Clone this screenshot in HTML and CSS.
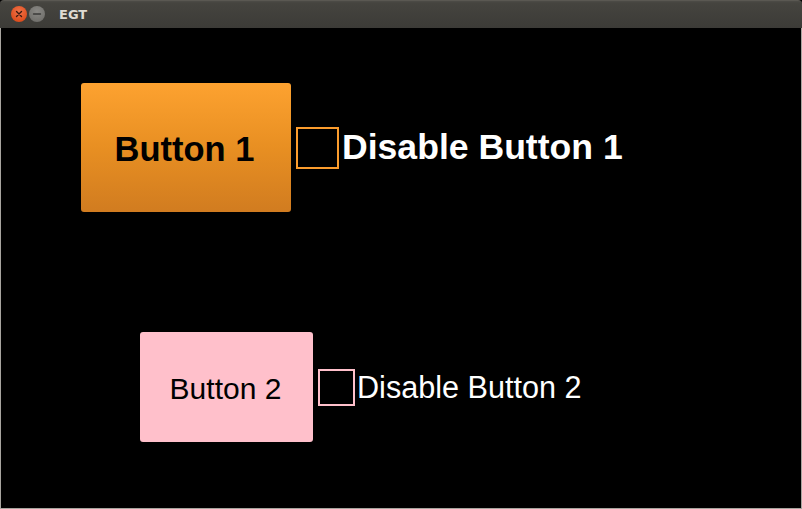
FILE: index.html
```html
<!DOCTYPE html>
<html>
<head>
<meta charset="utf-8">
<title>EGT</title>
<link rel="stylesheet" href="styles.css">
</head>
<body>
<div class="window">
  <div class="titlebar">
    <div class="controls">
      <span class="ctl close"><svg width="16" height="16" viewBox="0 0 16 16"><path d="M5.5 5.5 L10.5 10.5 M10.5 5.5 L5.5 10.5" stroke="#3a1a10" stroke-width="1.4" stroke-linecap="round"/></svg></span>
      <span class="ctl min"><svg width="16" height="16" viewBox="0 0 16 16"><path d="M4.5 8 H11.5" stroke="#3a3a38" stroke-width="1.4" stroke-linecap="round"/></svg></span>
    </div>
    <span class="title">EGT</span>
  </div>
  <div class="content">
    <div class="row row1">
      <button class="btn btn1">Button 1</button>
      <span class="check check1"></span>
      <span class="label label1">Disable Button 1</span>
    </div>
    <div class="row row2">
      <button class="btn btn2">Button 2</button>
      <span class="check check2"></span>
      <span class="label label2">Disable Button 2</span>
    </div>
  </div>
</div>
</body>
</html>
```
FILE: styles.css
```css
html, body {
  margin: 0;
  padding: 0;
  background: #000;
}
.window {
  width: 802px;
  height: 509px;
  display: flex;
  flex-direction: column;
  font-family: "Liberation Sans", Arial, sans-serif;
}
.titlebar {
  height: 28px;
  flex: none;
  display: flex;
  align-items: center;
  background: linear-gradient(#4d4c47 0px, #45443f 2px, #3c3b37 27px);
  border-radius: 4px 4px 0 0;
  box-sizing: border-box;
  border-top: 1px solid #5a5852;
}
.controls {
  display: flex;
  gap: 2px;
  margin-left: 11px;
  margin-top: -1px;
}
.ctl {
  width: 16px;
  height: 16px;
  border-radius: 50%;
  display: block;
}
.ctl svg { display: block; }
.close {
  background: radial-gradient(circle at 50% 35%, #f0734a, #de4f1f 70%, #c9461c);
}
.min {
  background: radial-gradient(circle at 50% 35%, #8a8985, #73726e 70%, #63625e);
}
.title {
  margin-left: 14px;
  color: #dfdbd2;
  font-family: "DejaVu Sans", sans-serif;
  font-weight: bold;
  font-size: 13px;
  margin-top: -1px;
}
.content {
  flex: 1;
  background: #000;
  border: 1px solid #a8a59f;
  border-top: none;
  display: flex;
  flex-direction: column;
}
.row {
  display: flex;
  align-items: center;
}
.row1 {
  margin-top: 55px;
  margin-left: 80px;
}
.row2 {
  margin-top: 120px;
  margin-left: 139px;
}
.btn {
  border: none;
  border-radius: 3px;
  padding: 0;
  font-family: "Liberation Sans", Arial, sans-serif;
  color: #000;
  display: flex;
  align-items: center;
  justify-content: center;
}
.btn1 {
  width: 210px;
  height: 129px;
  background: linear-gradient(#fda230, #e88f22 50%, #d17c20);
  font-size: 34.5px;
  font-weight: bold;
  padding-top: 4px;
  padding-right: 3px;
}
.btn2 {
  width: 173px;
  height: 110px;
  background: #ffc0cb;
  font-size: 30px;
  padding-top: 4px;
  padding-right: 2px;
}
.check {
  display: block;
  box-sizing: border-box;
  margin-left: 5px;
}
.check1 {
  width: 43px;
  height: 42px;
  border: 2px solid #fb9c2d;
}
.check2 {
  width: 37px;
  height: 37px;
  border: 2px solid #ffc0cb;
}
.label {
  color: #fff;
}
.label1 {
  font-size: 35.6px;
  font-weight: bold;
  margin-left: 3px;
}
.label2 {
  font-size: 30.6px;
  margin-left: 2px;
}
```
